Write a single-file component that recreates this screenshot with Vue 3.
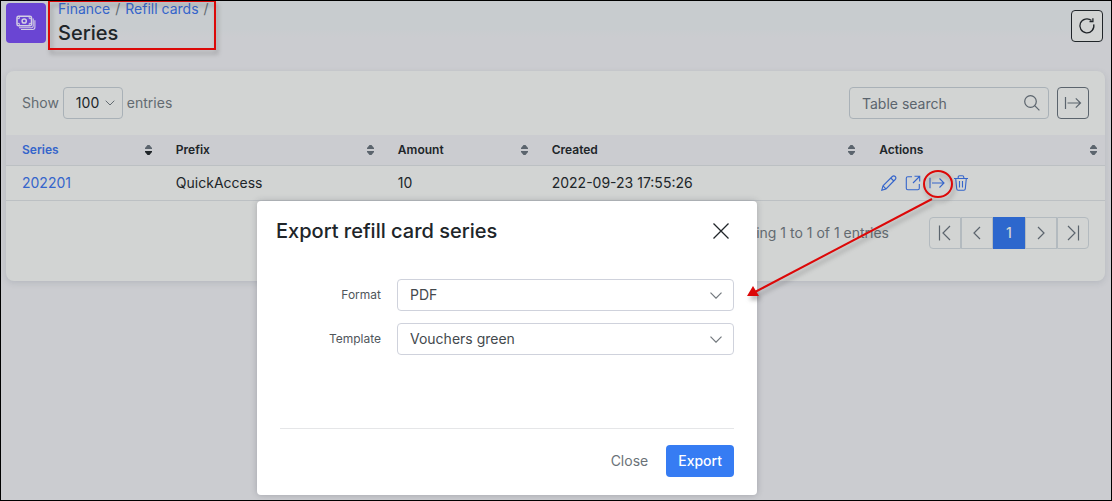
<script setup>
import { ref } from 'vue'

const crumbs = ['Finance', 'Refill cards']
const columns = [
  { label: 'Series', key: 'series', sorted: true },
  { label: 'Prefix', key: 'prefix' },
  { label: 'Amount', key: 'amount' },
  { label: 'Created', key: 'created' },
  { label: 'Actions', key: 'actions' },
]
const rows = [
  { series: '202201', prefix: 'QuickAccess', amount: 10, created: '2022-09-23 17:55:26' },
]
const pageSize = ref('100')
const search = ref('')
const format = ref('PDF')
const template = ref('Vouchers green')
</script>

<template>
  <div class="page">
    <header class="top">
      <div class="logo">
        <svg width="20" height="16" viewBox="0 0 20 16" fill="none" stroke="currentColor" stroke-width="1.5">
          <rect x="1" y="1.2" width="14.5" height="9.6" rx="1.6" />
          <circle cx="8.2" cy="6" r="2.1" />
          <path d="M1.500 3.600h1.800V1.800M15 3.600h-1.800V1.800M1.500 8.400h1.800v1.800M15 8.400h-1.800v1.800" stroke-width="1" />
          <path d="M17.200 3.500v7.600q0 1.600-1.600 1.600H3M18.900 5.300v7q0 2.200-2.200 2.200H5" stroke-width="1.100" />
        </svg>
      </div>
      <div class="heading">
        <nav class="crumbs" aria-label="Breadcrumb">
          <template v-for="c in crumbs" :key="c"><a href="#">{{ c }}</a><span class="slash">/</span></template>
        </nav>
        <h1>Series</h1>
      </div>
      <button class="square dark" type="button" aria-label="Refresh">
        <svg width="18" height="18" viewBox="0 0 18 18" fill="none" stroke="currentColor" stroke-width="1.3">
          <path d="M15.700 7.300A7 7 0 1 1 13.500 3.600" />
          <path d="M11.500 4.600h3.400V1.200" />
        </svg>
      </button>
    </header>

    <main class="card">
      <div class="toolbar">
        <label for="size">Show</label>
        <div class="pick small">
          <select id="size" v-model="pageSize"><option>100</option></select>
          <svg width="10" height="6" viewBox="0 0 10 6" fill="none" stroke="currentColor"><path d="M.7.700 5 5 9.300.700" /></svg>
        </div>
        <span>entries</span>
        <div class="search">
          <input v-model="search" type="text" placeholder="Table search" aria-label="Table search" />
          <svg width="16" height="16" viewBox="0 0 16 16" fill="none" stroke="currentColor" stroke-width="1.200">
            <circle cx="6.500" cy="6.500" r="5.800" /><path d="m10.700 10.700 4.700 4.700" />
          </svg>
        </div>
        <button class="square" type="button" aria-label="Export table">
          <svg width="18" height="12" viewBox="0 0 18 12" fill="none" stroke="currentColor" stroke-width="1.200"><path d="M1.500 0v12M3.500 6h13M11.800 1.300 16.500 6l-4.700 4.700" /></svg>
        </button>
      </div>

      <table>
        <thead>
          <tr>
            <th v-for="c in columns" :key="c.key" :class="['col-' + c.key, { sorted: c.sorted }]" scope="col">
              <div class="th">
                {{ c.label }}
                <svg width="7" height="10" viewBox="0 0 7 10"><path class="up" d="M0 4h7V3L4.500 0h-2L0 3z" /><path class="down" d="M0 6h7v1L4.500 10h-2L0 7z" /></svg>
              </div>
            </th>
          </tr>
        </thead>
        <tbody>
          <tr v-for="r in rows" :key="r.series">
            <td><a href="#">{{ r.series }}</a></td>
            <td>{{ r.prefix }}</td>
            <td>{{ r.amount }}</td>
            <td>{{ r.created }}</td>
            <td>
              <div class="actions">
                <button type="button" aria-label="Edit">
                  <svg width="16" height="16" viewBox="0 0 16 16" fill="none" stroke="currentColor" stroke-width="1.100"><path d="m.800 15.200 1.200-4.400L11.300 1.500q1.500-1.300 2.900 0 1.400 1.500 0 3L5 13.900zM9.800 3l3 3M2 10.800l3 3.100" /></svg>
                </button>
                <button type="button" aria-label="Open">
                  <svg width="16" height="16" viewBox="0 0 16 16" fill="none" stroke="currentColor" stroke-width="1.100"><path d="M7 1.800H2.800q-1.500 0-1.500 1.500v9.900q0 1.500 1.500 1.500h10q1.500 0 1.500-1.500V9M9.500 1.300h5.200v5.200M14.500 1.500 8 8" /></svg>
                </button>
                <button type="button" aria-label="Export">
                  <svg width="16" height="16" viewBox="0 0 16 16" fill="none" stroke="currentColor" stroke-width="1.100"><path d="M1 2.800v10.400M3 8h12M10.500 3.500 15 8l-4.500 4.500" /></svg>
                </button>
                <button type="button" aria-label="Delete">
                  <svg width="16" height="16" viewBox="0 0 16 16" fill="none" stroke="currentColor" stroke-width="1.100"><path d="M1 3.500h14M5.200 3.500V2.200q0-1.400 1.400-1.400h2.800q1.400 0 1.400 1.400v1.300M2.700 3.500l1 10.300q.1 1.500 1.500 1.500h5.600q1.400 0 1.500-1.500l1-10.300M6.500 6v6.500M9.500 6v6.500" /></svg>
                </button>
              </div>
            </td>
          </tr>
        </tbody>
      </table>

      <footer class="foot">
        <span>Showing 1 to 1 of 1 entries</span>
        <nav class="pager" aria-label="Pages">
          <button type="button" aria-label="First page"><svg width="14" height="16" viewBox="0 0 14 16"><path d="M1.500.500v15M12 1 5 8l7 7" /></svg></button>
          <button type="button" aria-label="Previous page"><svg width="14" height="16" viewBox="0 0 14 16"><path d="M10 2 4 8l6 6" /></svg></button>
          <button class="current" type="button">1</button>
          <button type="button" aria-label="Next page"><svg width="14" height="16" viewBox="0 0 14 16"><path d="m4 2 6 6-6 6" /></svg></button>
          <button type="button" aria-label="Last page"><svg width="14" height="16" viewBox="0 0 14 16"><path d="M12.500.500v15M2 1l7 7-7 7" /></svg></button>
        </nav>
      </footer>
    </main>

    <section class="modal" role="dialog" aria-labelledby="modal-title">
      <div class="modal-head">
        <h2 id="modal-title">Export refill card series</h2>
        <button type="button" aria-label="Close dialog">
          <svg width="16" height="16" viewBox="0 0 16 16" fill="none" stroke="currentColor" stroke-width="1.300"><path d="m.5.500 15 15M15.500.500l-15 15" /></svg>
        </button>
      </div>
      <form class="fields" @submit.prevent>
        <label for="format">Format</label>
        <div class="pick">
          <select id="format" v-model="format"><option>PDF</option></select>
          <svg width="12" height="7" viewBox="0 0 12 7" fill="none" stroke="currentColor" stroke-width="1.200"><path d="M.5.700 6 6.200 11.500.700" /></svg>
        </div>
        <label for="template">Template</label>
        <div class="pick">
          <select id="template" v-model="template"><option>Vouchers green</option></select>
          <svg width="12" height="7" viewBox="0 0 12 7" fill="none" stroke="currentColor" stroke-width="1.200"><path d="M.5.700 6 6.200 11.500.700" /></svg>
        </div>
      </form>
      <div class="modal-foot">
        <button class="plain" type="button">Close</button>
        <button class="primary" type="button">Export</button>
      </div>
    </section>

    <svg class="notes" width="1112" height="501" viewBox="0 0 1112 501" fill="none" stroke="#dc0808" stroke-width="2" aria-hidden="true">
      <rect x="49" y="1" width="166" height="48" />
      <ellipse cx="938" cy="184" rx="14" ry="13" />
      <path d="M932 199 755 292" />
      <path d="m747 296 6-10 6 10z" fill="#dc0808" stroke="none" />
    </svg>
  </div>
</template>

<style>
body { margin: 0; }
</style>

<style scoped>
.page {
  position: relative;
  box-sizing: border-box;
  min-height: 100vh;
  padding: 2px 6px 16px 5px;
  overflow: hidden;
  border: 1px solid #000;
  background: linear-gradient(#c8cccf 0, #c8cccf 28px, #cbccd0 36px);
  color: #202529;
  font: 14px/20px Inter, "Liberation Sans", sans-serif;
}
button, select, input { margin: 0; font: inherit; color: inherit; }
button { display: flex; align-items: center; justify-content: center; padding: 0; border: 0; background: none; }
a { color: #3565cb; text-decoration: none; }
svg { display: block; flex: none; }
.top { display: flex; align-items: flex-start; height: 40px; margin-bottom: 28px; }
.logo {
  display: flex; align-items: center; justify-content: center;
  width: 40px; height: 40px; border-radius: 4px;
  background: #6a45d3; color: #d3cfe4;
}
.heading { flex: 1; margin-left: 12px; }
.crumbs { display: flex; margin-top: -4px; color: #636b71; }
.slash { margin: 0 5px; }
h1 { margin: 2px 0 0; font-size: 20px; line-height: 24px; font-weight: 500; }
.square {
  box-sizing: border-box; width: 32px; height: 32px;
  border: 1px solid #5b646d; border-radius: 4px; color: #5b646d;
}
.square.dark { margin: 7px 2px 0 0; border-color: #202529; background: #d2d4d3; color: #202529; }
.card { border-radius: 8px; background: #d2d4d3; box-shadow: 0 2px 6px rgba(60, 70, 90, .14); }
.toolbar { display: flex; align-items: center; padding: 16px; color: #636b71; }
.toolbar label { margin-right: 4px; }
.pick { position: relative; display: flex; align-items: center; color: #72787d; }
.pick select {
  box-sizing: border-box; width: 100%; height: 32px; padding: 0 32px 0 12px;
  appearance: none; border: 1px solid #cfd2dc; border-radius: 4px;
  background: #fff; color: #43494d;
}
.pick svg { position: absolute; right: 12px; pointer-events: none; }
.small { width: 60px; margin-right: 4px; color: #202529; }
.small select { padding: 0 16px 0 12px; border-color: #a9b1b7; background: none; color: #202529; }
.small svg { right: 8px; color: #636b71; }
.search { position: relative; display: flex; align-items: center; width: 200px; margin: 0 8px 0 auto; }
.search input {
  box-sizing: border-box; width: 100%; height: 32px; padding: 0 36px 0 12px;
  border: 1px solid #a9b1b7; border-radius: 4px; background: none;
}
.search input::placeholder { color: #5b646d; opacity: 1; }
.search svg { position: absolute; right: 9px; color: #5b646d; }
table { width: 100%; table-layout: fixed; border-collapse: separate; border-spacing: 0; }
th, td { box-sizing: border-box; padding: 0 8px 0 16px; border-bottom: 1px solid #bcc0c3; text-align: left; }
.col-series, .col-amount { width: 14%; }
.col-prefix { width: 20.2%; }
.col-created { width: 29.8%; }
th { height: 31px; background: #cbccd0; font-size: 12px; font-weight: 600; }
td { height: 35px; }
.th { display: flex; align-items: center; justify-content: space-between; }
.th svg { fill: #5b646d; }
.sorted { color: #3565cb; }
.sorted .down { fill: #202529; }
.actions { display: flex; gap: 8px; padding-left: 2px; color: #3565cb; }
.foot { display: flex; align-items: center; justify-content: flex-end; gap: 40px; padding: 16px 16px 32px; color: #636b71; }
.pager { display: flex; }
.pager button { box-sizing: border-box; width: 32px; height: 32px; border: 1px solid #b3babf; }
.pager button:first-child { border-radius: 4px 0 0 4px; }
.pager button:last-child { border-radius: 0 4px 4px 0; }
.pager svg { fill: none; stroke: #5b646d; stroke-width: 1.2; }
.pager .current { border-color: #2d67cd; background: #2d67cd; color: #d2d4d3; font-weight: 500; }
.modal {
  position: absolute; top: 200px; left: 256px; box-sizing: border-box;
  width: 500px; padding: 16px 23px 18px 19px; border-radius: 4px;
  background: #fff; box-shadow: 0 0 6px rgba(40, 45, 60, .25);
}
.modal-head { display: flex; align-items: center; justify-content: space-between; padding-right: 5px; }
h2 { margin: 0; font-size: 20px; line-height: 28px; font-weight: 500; }
.fields { display: grid; grid-template-columns: 105px 1fr; gap: 12px 16px; align-items: center; margin: 34px 0 73px; }
.fields label { font-size: 12px; text-align: right; color: #50565b; }
.modal-foot { display: flex; justify-content: flex-end; gap: 18px; margin-left: 4px; padding-top: 16px; border-top: 1px solid #e5e6e8; }
.plain { color: #6b7278; }
.primary { height: 32px; padding: 0 12px; border-radius: 4px; background: #367cf3; color: #fff; font-weight: 500; }
.notes { position: absolute; top: -1px; left: -1px; pointer-events: none; filter: drop-shadow(2px 4px 2px rgba(60, 60, 60, .35)); }
</style>
